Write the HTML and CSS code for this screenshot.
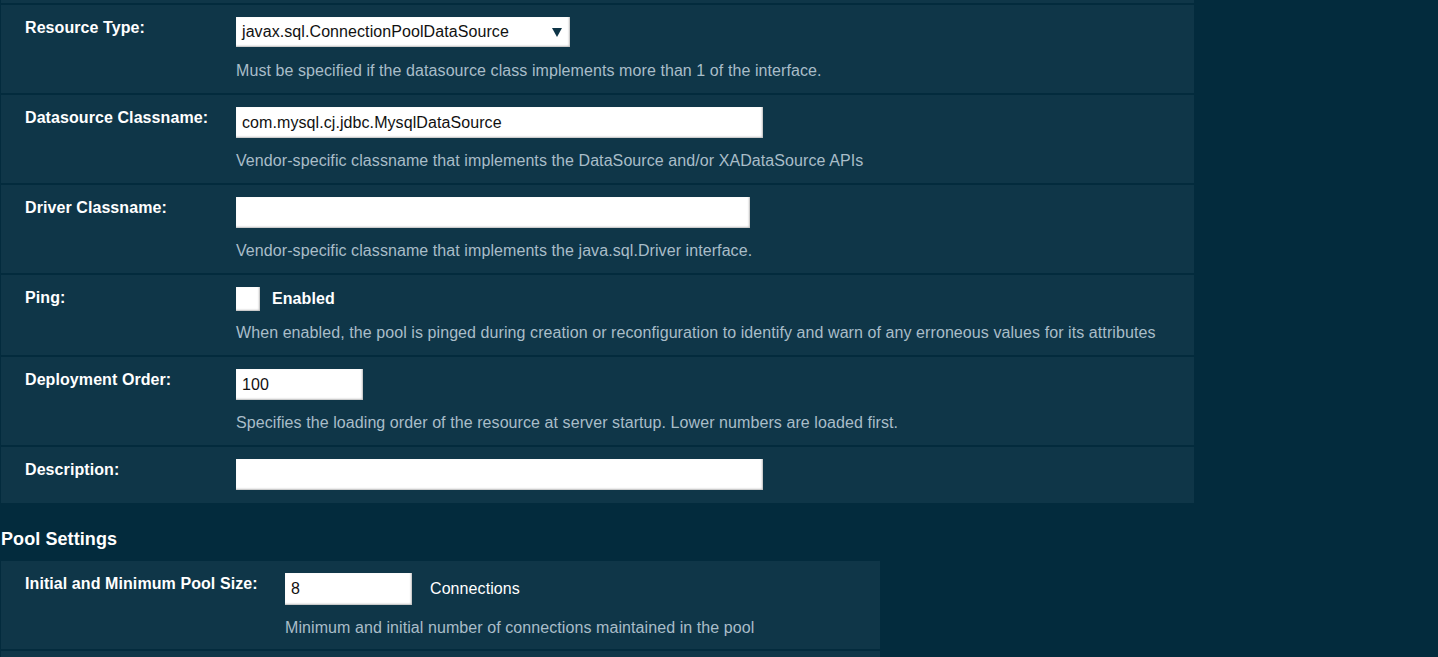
FILE: index.html
```html
<!DOCTYPE html>
<html>
<head>
<meta charset="utf-8">
<link rel="stylesheet" href="styles.css">
</head>
<body>
<div class="page">
  <div class="table wide">
    <div class="row stub"></div>
    <div class="row">
      <div class="label">Resource Type:</div>
      <div class="value">
        <div class="select w334"><span>javax.sql.ConnectionPoolDataSource</span><svg class="caret" width="10" height="9" viewBox="0 0 10 9"><path d="M0 0H10L5 9Z" fill="#0e3547"/></svg></div>
        <div class="help">Must be specified if the datasource class implements more than 1 of the interface.</div>
      </div>
    </div>
    <div class="row">
      <div class="label">Datasource Classname:</div>
      <div class="value">
        <div class="input w527">com.mysql.cj.jdbc.MysqlDataSource</div>
        <div class="help">Vendor-specific classname that implements the DataSource and/or XADataSource APIs</div>
      </div>
    </div>
    <div class="row">
      <div class="label">Driver Classname:</div>
      <div class="value">
        <div class="input w514"></div>
        <div class="help">Vendor-specific classname that implements the java.sql.Driver interface.</div>
      </div>
    </div>
    <div class="row">
      <div class="label">Ping:</div>
      <div class="value">
        <div class="check-line"><span class="checkbox"></span><span class="check-label">Enabled</span></div>
        <div class="help">When enabled, the pool is pinged during creation or reconfiguration to identify and warn of any erroneous values for its attributes</div>
      </div>
    </div>
    <div class="row">
      <div class="label">Deployment Order:</div>
      <div class="value">
        <div class="input w127">100</div>
        <div class="help">Specifies the loading order of the resource at server startup. Lower numbers are loaded first.</div>
      </div>
    </div>
    <div class="row">
      <div class="label">Description:</div>
      <div class="value">
        <div class="input w527 last"></div>
      </div>
    </div>
  </div>

  <h2 class="section-title">Pool Settings</h2>

  <div class="table narrow">
    <div class="row pool">
      <div class="label">Initial and Minimum Pool Size:</div>
      <div class="value">
        <div class="unit-line"><div class="input w127 tall">8</div><span class="unit">Connections</span></div>
        <div class="help">Minimum and initial number of connections maintained in the pool</div>
      </div>
    </div>
    <div class="row pool next"></div>
  </div>
</div>
</body>
</html>
```
FILE: styles.css
```css
html, body {
  margin: 0;
  padding: 0;
  background: #032b3d;
  font-family: "Liberation Sans", Arial, sans-serif;
  font-size: 16px;
  color: #ffffff;
  letter-spacing: 0.08px;
  overflow: hidden;
}

.page {
  padding-left: 1px;
}

.table {
  display: flex;
  flex-direction: column;
  gap: 2px;
}

.table.wide { width: 1193px; }
.table.narrow { width: 879px; }

.row {
  background: #0f3648;
  display: grid;
  padding: 12px 0;
}

.wide .row { grid-template-columns: 235px 1fr; }
.narrow .row { grid-template-columns: 284px 1fr; }

.row.stub {
  height: 3px;
  padding: 0;
}

.row.pool { padding-bottom: 11px; }

.row.next { height: 40px; }

.label {
  padding-left: 24px;
  padding-top: 1px;
  font-weight: bold;
  line-height: 20px;
}

.value {
  display: flex;
  flex-direction: column;
  align-items: flex-start;
}

.help {
  color: #a9bdc8;
  line-height: 20px;
}

.input, .select {
  background: #ffffff;
  color: #111111;
  box-shadow: inset -1px -1px 2px rgba(0, 0, 0, 0.28);
  box-sizing: border-box;
  padding-left: 6px;
  line-height: 20px;
  display: flex;
  align-items: center;
}

.input {
  height: 31px;
  margin-bottom: 13px;
}

.input.last { margin-bottom: 1px; }
.input.tall { height: 32px; margin-bottom: 0; }

.select {
  height: 30px;
  margin-bottom: 14px;
  justify-content: space-between;
  padding-right: 8px;
}

.caret { display: block; }

.w334 { width: 334px; }
.w527 { width: 527px; }
.w514 { width: 514px; }
.w127 { width: 127px; }

.check-line {
  display: flex;
  align-items: center;
  gap: 12px;
  margin-bottom: 12px;
}

.checkbox {
  width: 24px;
  height: 24px;
  background: #ffffff;
  box-shadow: inset -1px -1px 2px rgba(0, 0, 0, 0.28);
}

.check-label {
  font-weight: bold;
  line-height: 20px;
}

.section-title {
  margin: 25px 0 11px;
  font-size: 18px;
  line-height: 22px;
  font-weight: bold;
}

.unit-line {
  display: flex;
  align-items: center;
  gap: 18px;
  margin-bottom: 13px;
}

.unit {
  line-height: 20px;
}
```
